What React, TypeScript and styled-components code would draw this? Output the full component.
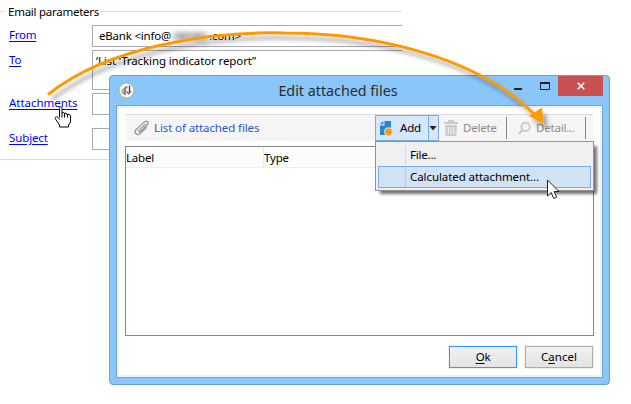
import React from "react";
import styled, { createGlobalStyle, css } from "styled-components";

const Global = createGlobalStyle`
  * { box-sizing: border-box; }
  html, body { margin: 0; background: #fff; overflow: hidden; }
  body { font: 12px/16px "Noto Sans", "Open Sans", sans-serif; color: #000; }
  button { font: inherit; color: inherit; padding: 0; }
`;

const Page = styled.main`
  position: relative;
  width: 631px;
  height: 404px;
`;

const T = styled.span<{ $ls?: number }>`
  font-size: 11.5px;
  letter-spacing: ${(p) => p.$ls ?? -0.2}px;
  white-space: nowrap;
`;

const Form = styled.section`
  width: 402px;
  height: 160px;
  border-bottom: 1px solid #dcdcdc;
`;

const Legend = styled.div`
  display: flex;
  align-items: center;
  height: 25px;
  padding-bottom: 2px;
  &::before { content: ""; width: 5px; height: 1px; background: #dcdcdc; margin-right: 3px; }
  &::after { content: ""; flex: 1; height: 1px; background: #dcdcdc; margin-left: 1px; }
`;

const Field = styled.div<{ $h: number; $gap: number }>`
  display: grid;
  grid-template-columns: 83px 1fr;
  padding-left: 9px;
  height: ${(p) => p.$h}px;
  margin-bottom: ${(p) => p.$gap}px;
`;

const Link = styled.a`
  color: #0000f8;
  text-decoration: underline;
  text-underline-offset: 2px;
  padding-top: 2px;
`;

const Input = styled.div`
  border: 1px solid #a7a9b0;
  border-right: 0;
  padding: 2px 0 0 6px;
  white-space: nowrap;
`;

const Recipients = styled(Input)`
  padding-left: 3px;
`;

const Redacted = styled.span`
  display: inline-block;
  width: 36px;
  height: 9px;
  margin: 0 1px;
  vertical-align: -1px;
  background: linear-gradient(90deg, #ddd, #aaa 25%, #c2c2c2 50%, #aaa 75%, #ddd);
  filter: blur(2px);
`;

const Dialog = styled.section`
  position: absolute;
  left: 109px;
  top: 75px;
  width: 501px;
  height: 310px;
  border: 1px solid #6b9fce;
  border-radius: 4px;
  background: #8ac6fa;
  padding: 0 6px 6px;
  display: flex;
  flex-direction: column;
`;

const TitleBar = styled.header`
  height: 29px;
  flex: none;
  display: grid;
  grid-template-columns: 56px 1fr 54px 45px;
`;

const Title = styled.h1`
  margin: 0;
  padding-top: 5px;
  text-align: center;
  font-size: 14.3px;
  line-height: 20px;
  font-weight: 400;
  color: #2c2c2c;
`;

const TitleIcon = styled.div`
  padding: 6px 0 0 2px;
  height: 29px;
`;

const WindowControls = styled.div`
  padding: 6px 0 0 10px;
`;

const Close = styled.button`
  width: 45px;
  height: 20px;
  border: 0;
  background: #c75050;
  display: flex;
  align-items: center;
  justify-content: center;
`;

const Client = styled.div`
  flex: 1;
  border: 1px solid #74a5d1;
  background: #fff;
  box-shadow: inset 0 0 0 2px #f0f0f0;
  padding: 8px 8px 0;
  display: flex;
  flex-direction: column;
`;

const Toolbar = styled.div`
  position: relative;
  height: 27px;
  margin: 0 1px 5px;
  background: #f5f5f5;
  border-top: 1px solid #dcdcdc;
  display: flex;
  align-items: center;
`;

const Heading = styled.div`
  width: 249px;
  padding-left: 7px;
  display: flex;
  align-items: center;
  gap: 3px;
  color: #2a58c4;
`;

const AddButton = styled.div`
  display: grid;
  grid-template-columns: 53px 9px;
  width: 64px;
  height: 26px;
  background: #d5e7f8;
  border: 1px solid #78aee5;
`;

const AddMain = styled.div`
  display: flex;
  align-items: center;
  gap: 6px;
  padding-left: 3px;
  border-right: 1px solid #78aee5;
`;

const Drop = styled.div`
  display: flex;
  align-items: center;
`;

const Tool = styled.div<{ $w: number; $gap: number; $pad: number }>`
  display: flex;
  align-items: center;
  width: ${(p) => p.$w}px;
  gap: ${(p) => p.$gap}px;
  padding-left: ${(p) => p.$pad}px;
  color: #8b8b8b;
`;

const Divider = styled.div`
  width: 1px;
  height: 22px;
  background: #888;
`;

const Table = styled.div`
  height: 190px;
  width: 469px;
  border: 1px solid #828790;
`;

const Head = styled.div`
  display: grid;
  grid-template-columns: 138px 1fr;
  height: 21px;
  background: #fcfcfc;
  border-bottom: 1px solid #e9eff5;
`;

const HeadCell = styled.div`
  padding-top: 3px;
  border-right: 1px solid #e5edf4;
  &:last-child { border-right: 0; }
`;

const Menu = styled.div`
  position: absolute;
  left: 249px;
  top: 26px;
  width: 219px;
  height: 50px;
  padding: 2px;
  border: 1px solid #929292;
  background: #f0f0f0;
  box-shadow: 4px 4px 3px -1px rgba(0, 0, 0, 0.55);
`;

const MenuItem = styled.div<{ $active?: boolean }>`
  display: grid;
  grid-template-columns: 27px 1fr;
  height: 22px;
  border: 1px solid transparent;
  ${(p) => p.$active && css`
    background: #d1e2f2;
    border-color: #78aee5;
  `}
  & > i { border-right: 1px solid ${(p) => (p.$active ? "#bdcbd9" : "#dadada")}; }
  & > span { padding: 2px 0 0 4px; }
`;

const Footer = styled.footer`
  display: flex;
  justify-content: flex-end;
  gap: 8px;
  padding: 10px 0 0;
  width: 468px;
`;

const Button = styled.button<{ $primary?: boolean }>`
  width: 68px;
  height: 22px;
  border: 1px solid ${(p) => (p.$primary ? "#3399ff" : "#acacac")};
  background: linear-gradient(#f0f0f0, #e4e4e4);
  box-shadow: 0 0 0 1px #f2f2f2;
  u { text-underline-offset: 2px; }
`;

const Overlay = styled.svg`
  position: absolute;
  left: 0;
  top: 0;
  pointer-events: none;
`;

const AppIcon = () => (
  <svg width="17" height="17" viewBox="0 0 17 17">
    <circle cx="8.5" cy="8.5" r="7.5" fill="#fafbf5" stroke="#97c66a" />
    <path d="M3.5 8l3-2.500v7.500l-3-1.500z" fill="#b0b2b0" />
    <path d="M6 5.500l3.500-1.700v2L8 6.800V13H6z" fill="#868886" />
    <path d="M11.500 3.500v6.500" fill="none" stroke="#444" strokeWidth="1.3" />
    <path d="M8.700 9.500l2 2.300 2.300-2.500" fill="none" stroke="#666" strokeWidth="1.3" />
  </svg>
);

const Clip = () => (
  <svg width="18" height="18" viewBox="0 0 18 18" fill="none" stroke="#969696" strokeWidth="1.3" strokeLinecap="round">
    <path d="M12.2 5.4 6.1 11.4c-.9.9.4 2.1 1.3 1.2l7-6.9c2-2-.9-4.8-2.9-2.8L3.2 10.5c-2.9 2.9 1 7 4 4.1l6.2-6" />
  </svg>
);

const NewIcon = () => (
  <svg width="15" height="17" viewBox="0 0 15 17">
    <path d="M5.500 1H12v14H1V5.500h4.500z" fill="#2b84d0" />
    <path d="M1 4.300l3.300-3.300v3.300z" fill="#2b84d0" />
    <circle cx="9.5" cy="11.8" r="4.5" fill="#d5e7f8" />
    <path d="M9.5 7.8v8M5.5 11.8h8M6.7 9l5.6 5.6M12.3 9l-5.6 5.6" stroke="#f09a16" strokeWidth="1.4" />
    <circle cx="9.5" cy="11.8" r="2.9" fill="#f09a16" />
  </svg>
);

const Trash = () => (
  <svg width="14" height="16" viewBox="0 0 14 16">
    <path d="M5 2V.7h4V2M0 3h14" fill="none" stroke="#c9c9c9" strokeWidth="1.8" />
    <path d="M1 5h12l-.7 11H1.7z" fill="#cbcbcb" />
    <path d="M4.3 7v7M7 7v7M9.7 7v7" stroke="#f5f5f5" />
  </svg>
);

const Lens = () => (
  <svg width="13" height="14" viewBox="0 0 13 14" fill="none" stroke="#c7c7c7">
    <circle cx="7.6" cy="5.8" r="4.2" strokeWidth="1.8" />
    <path d="M4.5 9 1 12.8" strokeWidth="2.3" />
  </svg>
);

export default function App() {
  return (
    <Page>
      <Global />
      <Form>
        <Legend><T $ls={-0.26}>Email parameters</T></Legend>
        <Field $h={22} $gap={3}>
          <Link><T>From</T></Link>
          <Input><T>eBank &lt;info@</T><Redacted /><T>.com&gt;</T></Input>
        </Field>
        <Field $h={40} $gap={3}>
          <Link><T>To</T></Link>
          <Recipients><T $ls={-0.11}>‘List ‘Tracking indicator report”</T></Recipients>
        </Field>
        <Field $h={22} $gap={13}>
          <Link><T $ls={-0.03}>Attachments</T></Link>
          <Input />
        </Field>
        <Field $h={22} $gap={0}>
          <Link><T $ls={-0.12}>Subject</T></Link>
          <Input />
        </Field>
      </Form>

      <Dialog>
        <TitleBar>
          <TitleIcon><AppIcon /></TitleIcon>
          <Title>Edit attached files</Title>
          <WindowControls>
            <svg width="37" height="12" viewBox="0 0 37 12">
              <path d="M0 7h8" stroke="#222" strokeWidth="2" />
              <path d="M26.5 1.5h9v6h-9z" fill="none" stroke="#222" />
              <path d="M26 1h10" stroke="#222" strokeWidth="2" />
            </svg>
          </WindowControls>
          <Close aria-label="Close">
            <svg width="8" height="8" viewBox="0 0 8 8"><path d="M.7.7l6.6 6.6M7.3.7.7 7.3" stroke="#fff" strokeWidth="1.6" /></svg>
          </Close>
        </TitleBar>
        <Client>
          <Toolbar>
            <Heading><Clip /><T $ls={-0.11}>List of attached files</T></Heading>
            <AddButton>
              <AddMain><NewIcon /><T>Add</T></AddMain>
              <Drop><svg width="8" height="5" viewBox="0 0 8 5"><path d="M.5 0h7L4 4.5z" fill="#222" /></svg></Drop>
            </AddButton>
            <Tool $w={67} $gap={5} $pad={5}><Trash /><T>Delete</T></Tool>
            <Divider />
            <Tool $w={78} $gap={5} $pad={11}><Lens /><T>Detail...</T></Tool>
            <Divider />
            <Menu>
              <MenuItem><i /><T>File...</T></MenuItem>
              <MenuItem $active><i /><T $ls={-0.08}>Calculated attachment...</T></MenuItem>
            </Menu>
          </Toolbar>
          <Table>
            <Head>
              <HeadCell><T>Label</T></HeadCell>
              <HeadCell><T>Type</T></HeadCell>
            </Head>
          </Table>
          <Footer>
            <Button $primary><T><u>O</u>k</T></Button>
            <Button><T $ls={0}>C<u>a</u>ncel</T></Button>
          </Footer>
        </Client>
      </Dialog>

      <Overlay width="631" height="404" viewBox="0 0 631 404">
        <defs>
          <filter id="shade" x="-10%" y="-20%" width="120%" height="150%">
            <feDropShadow dx="4" dy="5" stdDeviation="2" floodColor="#000" floodOpacity="0.35" />
          </filter>
        </defs>
        <g filter="url(#shade)">
          <path d="M48 94.500C110 45 215 31 285 33C370 33 475 55 534 114" fill="none" stroke="#ff9900" strokeWidth="3" />
          <path d="M529 116 542 107.500 543.500 123.500z" fill="#ff9900" />
        </g>
        <path d="M59.500 117.500v-9c0-2 2.500-2 2.500 0v5c0-1.500 2.500-1.500 2.500 0v.7c0-1.500 2.500-1.300 2.500 0v.8c0-1.300 3.500-1 3.500 1v6l-2 3v2h-9v-2l-4-6c-1-2 1-3 2.500-1.500l1.500 2" fill="#fff" stroke="#000" />
        <path d="M62 113.500v4M64.500 114v3.500M67.500 115v2.500" stroke="#000" />
        <path d="M547.500 180v16l3.700-3.500 2.600 6 2.900-1.300-2.700-5.700h5z" fill="#fff" stroke="#222" />
      </Overlay>
    </Page>
  );
}
